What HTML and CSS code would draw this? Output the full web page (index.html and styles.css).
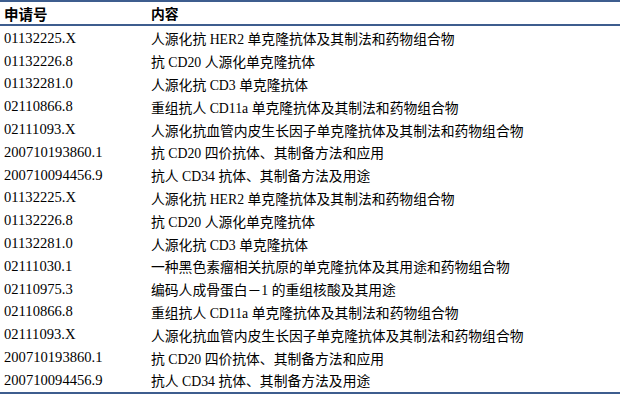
FILE: index.html
```html
<!DOCTYPE html>
<html lang="zh">
<head>
<meta charset="utf-8">
<link rel="stylesheet" href="styles.css">
</head>
<body>
<div class="table">
  <div class="row head"><div class="c1">申请号</div><div class="c2">内容</div></div>
  <div class="body">
    <div class="row"><div class="c1">01132225.X</div><div class="c2">人源化抗 HER2 单克隆抗体及其制法和药物组合物</div></div>
    <div class="row"><div class="c1">01132226.8</div><div class="c2">抗 CD20 人源化单克隆抗体</div></div>
    <div class="row"><div class="c1">01132281.0</div><div class="c2">人源化抗 CD3 单克隆抗体</div></div>
    <div class="row"><div class="c1">02110866.8</div><div class="c2">重组抗人 CD11a 单克隆抗体及其制法和药物组合物</div></div>
    <div class="row"><div class="c1">02111093.X</div><div class="c2">人源化抗血管内皮生长因子单克隆抗体及其制法和药物组合物</div></div>
    <div class="row"><div class="c1">200710193860.1</div><div class="c2">抗 CD20 四价抗体、其制备方法和应用</div></div>
    <div class="row"><div class="c1">200710094456.9</div><div class="c2">抗人 CD34 抗体、其制备方法及用途</div></div>
    <div class="row"><div class="c1">01132225.X</div><div class="c2">人源化抗 HER2 单克隆抗体及其制法和药物组合物</div></div>
    <div class="row"><div class="c1">01132226.8</div><div class="c2">抗 CD20 人源化单克隆抗体</div></div>
    <div class="row"><div class="c1">01132281.0</div><div class="c2">人源化抗 CD3 单克隆抗体</div></div>
    <div class="row"><div class="c1">02111030.1</div><div class="c2">一种黑色素瘤相关抗原的单克隆抗体及其用途和药物组合物</div></div>
    <div class="row"><div class="c1">02110975.3</div><div class="c2">编码人成骨蛋白－1 的重组核酸及其用途</div></div>
    <div class="row"><div class="c1">02110866.8</div><div class="c2">重组抗人 CD11a 单克隆抗体及其制法和药物组合物</div></div>
    <div class="row"><div class="c1">02111093.X</div><div class="c2">人源化抗血管内皮生长因子单克隆抗体及其制法和药物组合物</div></div>
    <div class="row"><div class="c1">200710193860.1</div><div class="c2">抗 CD20 四价抗体、其制备方法和应用</div></div>
    <div class="row"><div class="c1">200710094456.9</div><div class="c2">抗人 CD34 抗体、其制备方法及用途</div></div>
  </div>
</div>
</body>
</html>
```
FILE: styles.css
```css
html, body {
  margin: 0;
  padding: 0;
  background: #ffffff;
}
.table {
  width: 620px;
  border-top: 2px solid #3d5d8e;
  border-bottom: 2px solid #3d5d8e;
  font-family: "Liberation Serif", "Noto Sans CJK SC", serif;
  font-size: 14px;
  color: #000;
}
.row {
  display: flex;
  align-items: center;
  height: 22.8px;
  padding-left: 4px;
  white-space: nowrap;
}
.head {
  height: 22px;
  font-weight: bold;
  font-size: 14.5px;
  border-bottom: 2px solid #3d5d8e;
}
.body {
  padding-top: 1px;
}
.c1 {
  width: 147px;
  flex: none;
  font-size: 14.6px;
}
.head .c1 {
  font-size: 14.5px;
}
.c2 {
  flex: 1;
  font-size: 13.8px;
}
```
